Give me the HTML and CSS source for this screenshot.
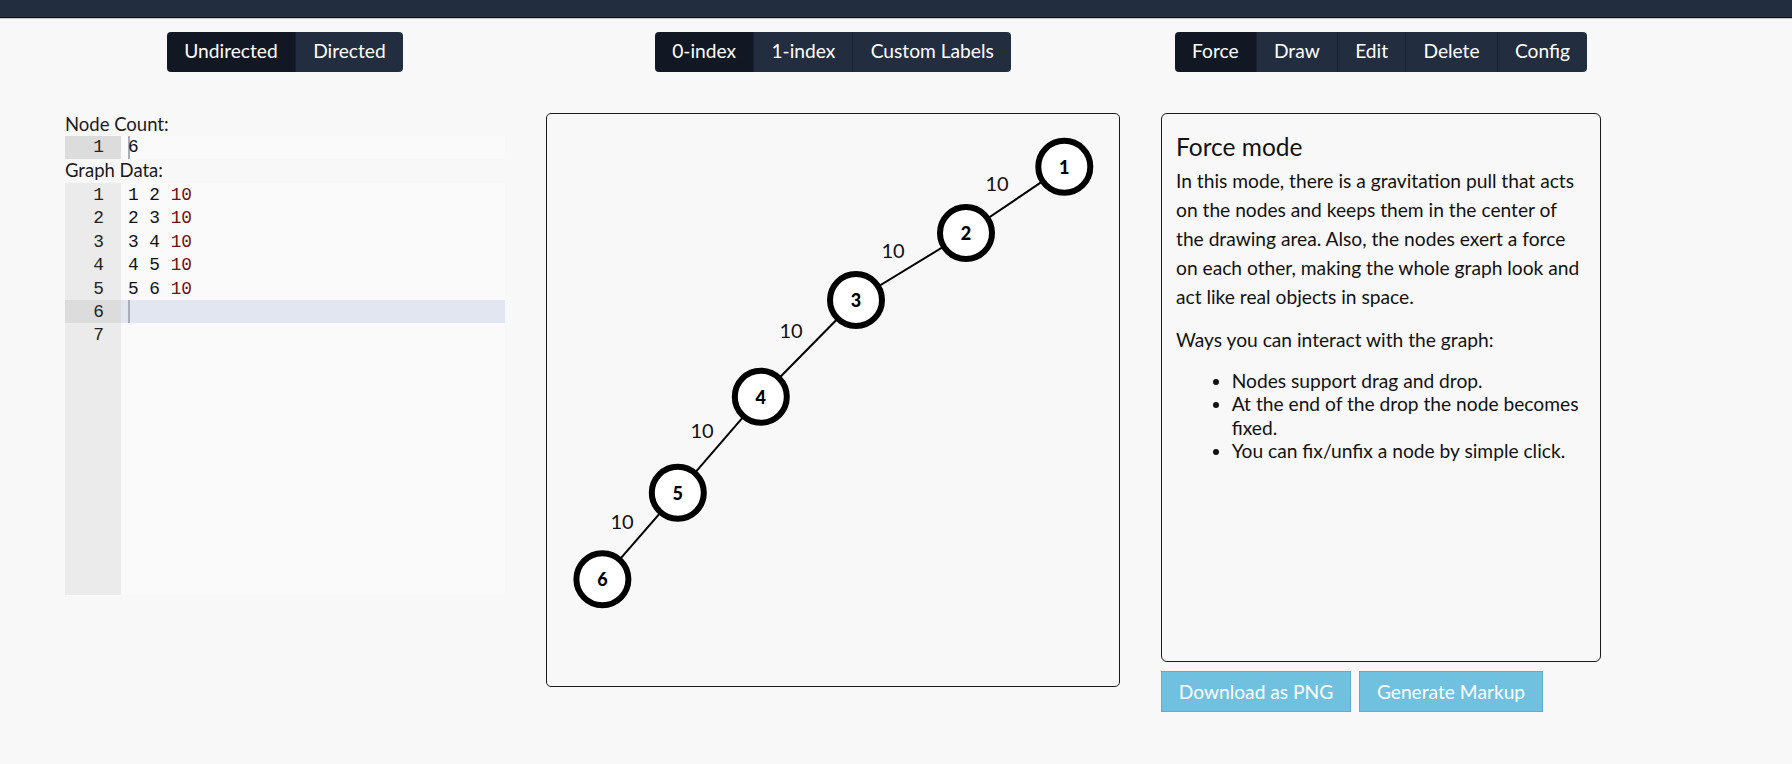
FILE: index.html
```html
<!DOCTYPE html>
<html>
<head>
<meta charset="utf-8">
<link rel="stylesheet" href="styles.css">
</head>
<body>
<div class="topbar"></div>
<div class="main">
  <div class="toolbar">
    <div class="btn-group">
      <button class="seg active">Undirected</button>
      <button class="seg">Directed</button>
    </div>
  </div>
  <div class="toolbar">
    <div class="btn-group">
      <button class="seg active">0-index</button>
      <button class="seg">1-index</button>
      <button class="seg">Custom Labels</button>
    </div>
  </div>
  <div class="toolbar">
    <div class="btn-group">
      <button class="seg active">Force</button>
      <button class="seg">Draw</button>
      <button class="seg">Edit</button>
      <button class="seg">Delete</button>
      <button class="seg">Config</button>
    </div>
  </div>

  <div class="inputs">
    <div class="label">Node Count:</div>
    <div class="editor editor-small">
      <div class="gutter">
        <div class="ln active-ln">1</div>
      </div>
      <div class="code">
        <div class="line"><span class="cursor"></span>6</div>
      </div>
    </div>
    <div class="label">Graph Data:</div>
    <div class="editor editor-big">
      <div class="gutter">
        <div class="ln">1</div>
        <div class="ln">2</div>
        <div class="ln">3</div>
        <div class="ln">4</div>
        <div class="ln">5</div>
        <div class="ln active-ln">6</div>
        <div class="ln">7</div>
      </div>
      <div class="code">
        <div class="line">1 2 <span class="num">10</span></div>
        <div class="line">2 3 <span class="num">10</span></div>
        <div class="line">3 4 <span class="num">10</span></div>
        <div class="line">4 5 <span class="num">10</span></div>
        <div class="line">5 6 <span class="num">10</span></div>
        <div class="line active-line"><span class="cursor"></span></div>
        <div class="line"></div>
      </div>
    </div>
  </div>

  <div class="canvas">
    <svg class="graph" width="572" height="572" viewBox="0 0 572 572">
      <g class="edges">
        <line x1="517.3" y1="52.7" x2="419" y2="119"/>
        <line x1="419" y1="119" x2="309" y2="186"/>
        <line x1="309" y1="186" x2="213.8" y2="282.7"/>
        <line x1="213.8" y1="282.7" x2="130.8" y2="378.7"/>
        <line x1="130.8" y1="378.7" x2="55.4" y2="465.3"/>
      </g>
      <g class="weights">
        <text x="450" y="69">10</text>
        <text x="346" y="136">10</text>
        <text x="244" y="216">10</text>
        <text x="155" y="316">10</text>
        <text x="75" y="407">10</text>
      </g>
      <g class="nodes">
        <circle cx="517.3" cy="52.7" r="26"/>
        <circle cx="419" cy="119" r="26"/>
        <circle cx="309" cy="186" r="26"/>
        <circle cx="213.8" cy="282.7" r="26"/>
        <circle cx="130.8" cy="378.7" r="26"/>
        <circle cx="55.4" cy="465.3" r="26"/>
      </g>
      <g class="node-labels">
        <text x="517.3" y="52.7">1</text>
        <text x="419" y="119">2</text>
        <text x="309" y="186">3</text>
        <text x="213.8" y="282.7">4</text>
        <text x="130.8" y="378.7">5</text>
        <text x="55.4" y="465.3">6</text>
      </g>
    </svg>
  </div>

  <div class="side">
    <div class="panel">
      <h2 class="panel-title">Force mode</h2>
      <p class="panel-text">In this mode, there is a gravitation pull that acts on the nodes and keeps them in the center of the drawing area. Also, the nodes exert a force on each other, making the whole graph look and act like real objects in space.</p>
      <p class="panel-sub">Ways you can interact with the graph:</p>
      <ul class="panel-list">
        <li>Nodes support drag and drop.</li>
        <li>At the end of the drop the node becomes fixed.</li>
        <li>You can fix/unfix a node by simple click.</li>
      </ul>
    </div>
    <div class="actions">
      <button class="action">Download as PNG</button>
      <button class="action">Generate Markup</button>
    </div>
  </div>
</div>
</body>
</html>
```
FILE: styles.css
```css
* { box-sizing: border-box; }
html, body {
  margin: 0;
  padding: 0;
  background: #f8f8f8;
  font-family: "Lato", "Noto Sans", sans-serif;
  color: #111;
}
.topbar {
  height: 18px;
  background: #222d3f;
  border-bottom: 1px solid #0e131b;
  box-shadow: 0 1px 0 #c4c4c4;
}
.main {
  display: grid;
  grid-template-columns: 440px 574px 440px;
  column-gap: 41px;
  row-gap: 41px;
  padding: 14px 0 0 65px;
}
.toolbar {
  display: flex;
  justify-content: center;
}
.btn-group {
  display: flex;
  border-radius: 4px;
  overflow: hidden;
  height: 40px;
}
.seg {
  border: none;
  border-left: 1px solid #182130;
  background: #222d3f;
  color: #fff;
  font-family: "Lato", sans-serif;
  font-size: 19.2px;
  padding: 0 17.2px 3px;
  height: 40px;
  margin: 0;
}
.seg:first-child { border-left: none; }
.seg.active { background: #111824; }

/* left column */
.inputs {
  display: flex;
  flex-direction: column;
}
.label {
  font-size: 18.5px;
  line-height: 23px;
  height: 23px;
  color: #1a1a1a;
}
.editor {
  display: flex;
  background: #fafafa;
  font-family: "Liberation Mono", "DejaVu Sans Mono", monospace;
  font-size: 17.8px;
}
.editor-small { height: 23px; }
.editor-big { height: 412px; margin-top: 1px; }
.gutter {
  width: 56px;
  background: #ebebeb;
  flex: none;
}
.editor-small .gutter { background: #dcdcdc; }
.ln {
  height: 23.4px;
  line-height: 24px;
  text-align: right;
  padding-right: 17px;
  color: #222;
}
.editor-small .ln { height: 23px; line-height: 23px; }
.ln.active-ln { background: #dcdcdc; }
.code { flex: 1; }
.line {
  height: 23.4px;
  line-height: 24px;
  padding-left: 7px;
  color: #111;
  white-space: pre;
  position: relative;
}
.editor-small .line { height: 23px; line-height: 23px; }
.line.active-line { background: #e2e6f0; }
.num { color: #6e1010; }
.cursor {
  display: inline-block;
  width: 2px;
  height: 23px;
  background: #a8adb8;
  vertical-align: top;
  margin-right: -2px;
}

/* canvas */
.canvas {
  height: 574px;
  border: 1px solid #1a1a1a;
  border-radius: 5px;
  background: #f8f8f8;
}
.graph { display: block; }
.edges line { stroke: #000; stroke-width: 2; }
.nodes circle { fill: #fff; stroke: #000; stroke-width: 6; }
.weights text {
  font-family: "Lato", sans-serif;
  font-size: 20px;
  fill: #111;
  text-anchor: middle;
  dominant-baseline: central;
}
.node-labels text {
  font-family: "Lato", sans-serif;
  font-weight: 900;
  font-size: 18px;
  fill: #000;
  text-anchor: middle;
  dominant-baseline: central;
}

/* right column */
.side {
  display: flex;
  flex-direction: column;
}
.panel {
  height: 549px;
  border: 1px solid #1a1a1a;
  border-radius: 6px;
  padding: 18px 14px 14px 14px;
}
.panel-title {
  margin: 0;
  font-weight: 400;
  font-size: 24.5px;
  line-height: 29.4px;
  color: #111;
}
.panel-text {
  margin: 6px 0 0 0;
  font-size: 19.2px;
  line-height: 28.8px;
}
.panel-sub {
  margin: 14.4px 0 0 0;
  font-size: 19.2px;
  line-height: 28.8px;
}
.panel-list {
  margin: 14.8px 0 0 0;
  padding-left: 55.7px;
  font-size: 19.2px;
  line-height: 23.1px;
}
.actions {
  display: flex;
  gap: 8px;
  margin-top: 9px;
}
.action {
  height: 41px;
  background: #70c0e0;
  border: 1px solid #5eaed2;
  color: #fff;
  font-family: "Lato", sans-serif;
  font-size: 19.2px;
  padding: 0 15px;
  margin: 0;
}
.action:first-child { width: 190px; }
.action:last-child { width: 184px; }
```
